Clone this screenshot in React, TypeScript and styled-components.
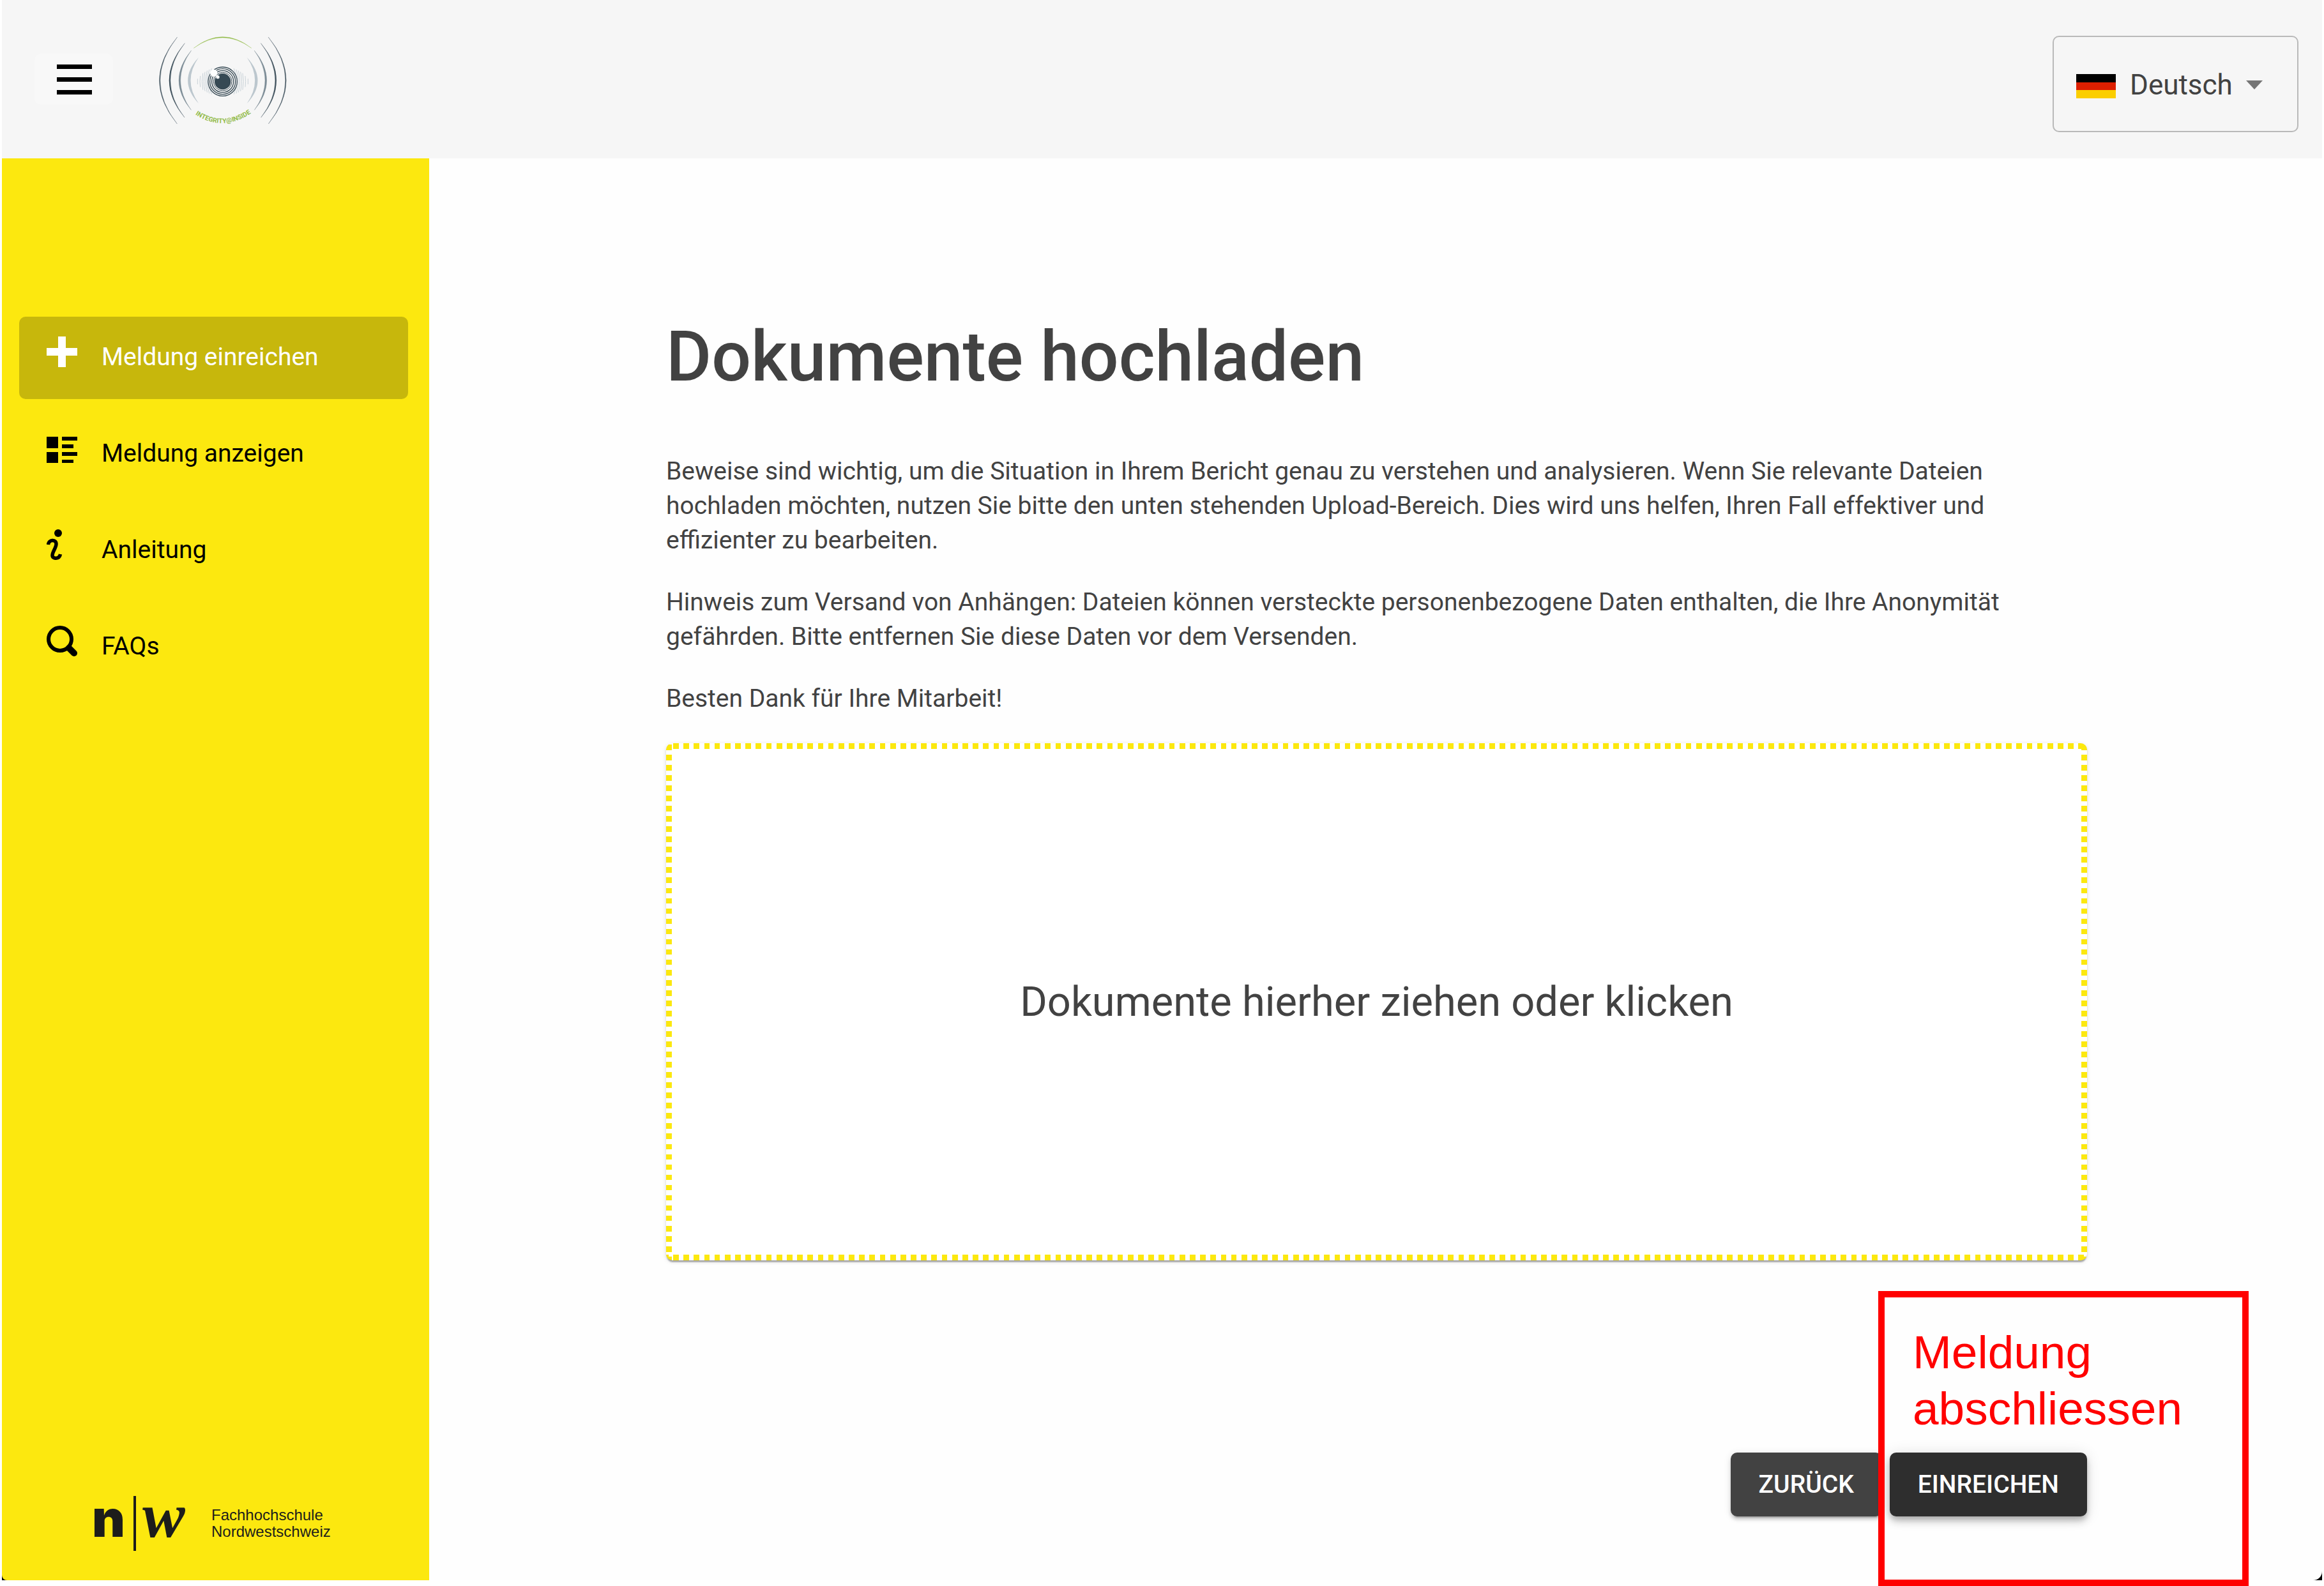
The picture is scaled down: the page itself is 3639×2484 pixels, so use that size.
import React from 'react';
import styled, { createGlobalStyle } from 'styled-components';

const yellow = '#fce80f';
const ink = '#424242';

const GlobalStyle = createGlobalStyle`
  *, *::before, *::after { box-sizing: border-box; }
  body {
    margin: 0;
    background: #fff;
    color: ${ink};
    font-family: Roboto, "Liberation Sans", sans-serif;
  }
`;

const Page = styled.div`
  display: flex;
  flex-direction: column;
  min-height: 100vh;
  padding: 0 3px 9px;
`;

const TopBar = styled.header`
  display: flex;
  align-items: center;
  height: 248px;
  padding: 0 37px 0 51px;
  background: #f6f6f6;
`;

const MenuButton = styled.button`
  display: flex;
  flex-direction: column;
  align-items: center;
  justify-content: center;
  gap: 13px;
  width: 123px;
  height: 80px;
  padding: 0 0 0 2px;
  border: 0;
  border-radius: 10px;
  background: #f8f8f8;
`;

const MenuBar = styled.span`
  width: 55px;
  height: 7px;
  background: #000;
`;

const HomeLink = styled.a`
  display: flex;
  margin: 4px auto 0 72px;
`;

const LanguagePicker = styled.label`
  display: flex;
  align-items: center;
  width: 385px;
  height: 151px;
  margin-top: 15px;
  padding: 6px 35px 0;
  border: 2px solid #b9b9b9;
  border-radius: 10px;
`;

const Flag = styled.svg`
  flex: none;
  width: 62px;
  height: 38px;
  margin-right: 22px;
`;

const LanguageSelect = styled.select`
  appearance: none;
  flex: none;
  margin: 0 21px 0 0;
  padding: 0 0 4px;
  border: 0;
  background: transparent;
  color: ${ink};
  font: 400 44px/50px Roboto, sans-serif;
`;

const Caret = styled.svg`
  flex: none;
  width: 26px;
  height: 14px;
  margin-bottom: 4px;
`;

/* The dark backdrop shows through at the rounded bottom corners. */
const Body = styled.div`
  display: flex;
  flex: 1;
  background: #000;
`;

const Sidebar = styled.aside`
  display: flex;
  flex: none;
  flex-direction: column;
  justify-content: space-between;
  width: 669px;
  padding: 248px 33px 46px 27px;
  border-bottom-left-radius: 8px;
  background: ${yellow};
`;

const Nav = styled.nav`
  display: flex;
  flex-direction: column;
  gap: 22px;
`;

const NavLink = styled.a<{ $active?: boolean }>`
  display: flex;
  align-items: center;
  height: 129px;
  padding: 0 43px 4px;
  border-radius: 10px;
  background: ${(p) => (p.$active ? '#c7b70c' : 'transparent')};
  color: ${(p) => (p.$active ? '#fff' : '#000')};
  font-size: 39px;
  line-height: 48px;
  text-decoration: none;
`;

const NavIcon = styled.svg`
  flex: none;
  width: 48px;
  height: 48px;
  margin: 0 38px 16px 0;
  fill: currentColor;
`;

const Brand = styled.div`
  display: flex;
  align-items: center;
  height: 86px;
  margin-left: 114px;
  color: #1d1d1b;
`;

const BrandN = styled.span`
  width: 65px;
  padding-bottom: 16px;
  font: 900 80px/70px Inter, sans-serif;
`;

const BrandW = styled.span`
  width: 122px;
  padding: 0 0 24px 10px;
  border-left: 4px solid #1d1d1b;
  font: italic 700 100px/62px "Liberation Serif", serif;
`;

const BrandName = styled.span`
  font: 400 24px/26px "Liberation Sans", sans-serif;
`;

const Main = styled.main`
  display: flex;
  flex: 1;
  flex-direction: column;
  padding: 248px 368px 100px 371px;
  border-bottom-right-radius: 14px;
  background: #fefefe;
`;

const Title = styled.h1`
  margin: 0 0 89px;
  font-size: 109px;
  font-weight: 500;
  line-height: 126px;
`;

const Copy = styled.div`
  max-width: 2100px;
  font-size: 39px;
  line-height: 54px;

  p { margin: 0 0 43px; }
`;

const DropZone = styled.button`
  height: 810px;
  padding: 0;
  border: 0;
  border-radius: 10px;
  background:
    repeating-linear-gradient(90deg, ${yellow} 0 1.08%, transparent 1.08% 2%) 11px 0 / 809px 9px repeat-x,
    repeating-linear-gradient(90deg, ${yellow} 0 1.08%, transparent 1.08% 2%) 11px 100% / 809px 9px repeat-x,
    repeating-linear-gradient(180deg, ${yellow} 0 1.08%, transparent 1.08% 2%) 0 18px / 9px 802px repeat-y,
    repeating-linear-gradient(180deg, ${yellow} 0 1.08%, transparent 1.08% 2%) 100% 18px / 9px 802px repeat-y,
    #fff;
  box-shadow: 0 5px 2px -2px rgba(0, 0, 0, .2), 0 2px 2px rgba(0, 0, 0, .14), 0 2px 7px rgba(0, 0, 0, .12);
  color: ${ink};
  font: 400 65px/76px Roboto, sans-serif;
`;

const Actions = styled.div`
  position: relative;
  display: flex;
  justify-content: flex-end;
  gap: 12px;
  margin-top: 301px;
`;

const ActionButton = styled.button<{ $raised?: boolean }>`
  height: 100px;
  padding: 0 44px;
  border: 0;
  border-radius: 10px;
  background: ${(p) => (p.$raised ? '#2e2e2e' : ink)};
  box-shadow: ${(p) =>
    p.$raised
      ? '0 5px 9px -2px rgba(0,0,0,.2), 0 9px 12px rgba(0,0,0,.14), 0 2px 23px rgba(0,0,0,.12)'
      : '0 7px 2px -5px rgba(0,0,0,.2), 0 5px 5px rgba(0,0,0,.14), 0 2px 12px rgba(0,0,0,.12)'};
  color: #fff;
  font: 500 39px/64px Roboto, sans-serif;
  text-transform: uppercase;
`;

/* Red callout laid over the submit button. */
const Callout = styled.div`
  position: absolute;
  top: -253px;
  right: -253px;
  width: 580px;
  height: 462px;
  padding: 42px 44px;
  border: 10px solid #f00;
  color: #f00;
  font: 400 73px/88px "Liberation Sans", Arial, sans-serif;
  pointer-events: none;
`;

const mirrored = (
  <g fill="none" strokeLinecap="round">
    <path d="M172 84Q5 287 172 491Q13 287 172 84Z" fill="#364954" stroke="#51626c" strokeWidth="1" />
    <path d="M207 113Q62 287 207 461Q74 287 207 113Z" fill="#364954" stroke="#51626c" strokeWidth="1" />
    <path d="M238 147Q122 287 238 426Q138 287 238 147Z" fill="#7b8b95" stroke="#7b8b95" strokeWidth="1" />
    <path d="M273 179Q172 287 273 395Q198 287 273 179Z" fill="#bcc7ce" />
    <g stroke="#c9d2d8" strokeWidth="3">
      <path d="M268 280V304" />
      <path d="M281 267Q277 292 281 317" />
      <path d="M293 254Q285 292 293 330" />
      <path d="M303 248Q292 292 303 336" />
      <path d="M313 242Q299 292 313 342" />
      <path d="M323 237Q303 292 323 347" />
      <path d="M334 232Q306 292 334 351" />
    </g>
  </g>
);

const IntegrityLogo = () => (
  <svg width="200" height="138" viewBox="87 80 600 414" role="img" aria-label="Integrity@Inside">
    {mirrored}
    <g transform="matrix(-1 0 0 1 773 0)">{mirrored}</g>
    <path d="M250 135Q386 29 521 135Q386 37 250 135Z" fill="#93bb4a" stroke="#93bb4a" />
    <circle cx="386" cy="292" r="70" fill="#f6f6f6" />
    <g fill="none" stroke="#364954">
      <circle cx="386" cy="292" r="68" strokeWidth="4" />
      <circle cx="386" cy="292" r="60" strokeWidth="4" />
      <circle cx="386" cy="292" r="51" strokeWidth="4" />
      <circle cx="386" cy="292" r="43" strokeWidth="3" />
    </g>
    <circle cx="386" cy="292" r="38" fill="#364954" />
    <circle cx="344" cy="252" r="17" fill="#fff" />
    <circle cx="363" cy="271" r="8" fill="#fff" />
    <path id="logo-curve" d="M236 432Q386 546 540 426" fill="none" />
    <text fill="#93bb4a" fontFamily="Roboto, sans-serif" fontSize="31" fontWeight="700">
      <textPath href="#logo-curve" startOffset="50%" textAnchor="middle">INTEGRITY@INSIDE</textPath>
    </text>
  </svg>
);

const PlusIcon = () => (
  <NavIcon viewBox="0 0 48 48" aria-hidden>
    <path d="M18 0H30V18H48V30H30V48H18V30H0V18H18Z" />
  </NavIcon>
);

const ListIcon = () => (
  <NavIcon viewBox="0 0 48 48" aria-hidden>
    <path d="M0 6H18V24H0ZM0 30H18V47H0ZM24 6H48V12H24ZM24 18H42V24H24ZM24 30H48V36H24ZM24 42H42V47H24Z" />
  </NavIcon>
);

const InfoIcon = () => (
  <NavIcon viewBox="0 0 48 48" aria-hidden>
    <circle cx="18" cy="6" r="6" />
    <path
      d="M2.500 24C3 16 15 15 15 23C15 29 9 35 9 41C9 47 20 47 21.500 39"
      fill="none"
      stroke="currentColor"
      strokeWidth="5.500"
    />
  </NavIcon>
);

const SearchIcon = () => (
  <NavIcon viewBox="0 0 48 48" aria-hidden>
    <circle cx="21" cy="21" r="18" fill="none" stroke="currentColor" strokeWidth="6" />
    <path d="M35 35L43 43" stroke="currentColor" strokeWidth="10" strokeLinecap="round" />
  </NavIcon>
);

export default function App() {
  return (
    <Page>
      <GlobalStyle />
      <TopBar>
        <MenuButton type="button" aria-label="Menü">
          <MenuBar />
          <MenuBar />
          <MenuBar />
        </MenuButton>
        <HomeLink href="#">
          <IntegrityLogo />
        </HomeLink>
        <LanguagePicker>
          <Flag viewBox="0 0 62 38" preserveAspectRatio="none" aria-hidden>
            <path d="M0 0H62V13H0Z" fill="#000" />
            <path d="M0 13H62V25H0Z" fill="#dd1f00" />
            <path d="M0 25H62V38H0Z" fill="#fbce00" />
          </Flag>
          <LanguageSelect aria-label="Sprache" defaultValue="de">
            <option value="de">Deutsch</option>
          </LanguageSelect>
          <Caret viewBox="0 0 26 14" aria-hidden>
            <path d="M0 0H26L13 14Z" fill="#757575" />
          </Caret>
        </LanguagePicker>
      </TopBar>
      <Body>
        <Sidebar>
          <Nav>
            <NavLink href="#einreichen" $active aria-current="page">
              <PlusIcon />
              Meldung einreichen
            </NavLink>
            <NavLink href="#anzeigen">
              <ListIcon />
              Meldung anzeigen
            </NavLink>
            <NavLink href="#anleitung">
              <InfoIcon />
              Anleitung
            </NavLink>
            <NavLink href="#faqs">
              <SearchIcon />
              FAQs
            </NavLink>
          </Nav>
          <Brand>
            <BrandN>n</BrandN>
            <BrandW>w</BrandW>
            <BrandName>
              Fachhochschule
              <br />
              Nordwestschweiz
            </BrandName>
          </Brand>
        </Sidebar>
        <Main>
          <Title>Dokumente hochladen</Title>
          <Copy>
            <p>
              Beweise sind wichtig, um die Situation in Ihrem Bericht genau zu verstehen und analysieren. Wenn Sie
              relevante Dateien hochladen möchten, nutzen Sie bitte den unten stehenden Upload-Bereich. Dies wird uns
              helfen, Ihren Fall effektiver und effizienter zu bearbeiten.
            </p>
            <p>
              Hinweis zum Versand von Anhängen: Dateien können versteckte personenbezogene Daten enthalten, die Ihre
              Anonymität gefährden. Bitte entfernen Sie diese Daten vor dem Versenden.
            </p>
            <p>Besten Dank für Ihre Mitarbeit!</p>
          </Copy>
          <DropZone type="button">Dokumente hierher ziehen oder klicken</DropZone>
          <Actions>
            <ActionButton type="button">Zurück</ActionButton>
            <ActionButton type="submit" $raised>
              Einreichen
            </ActionButton>
            <Callout>
              Meldung
              <br />
              abschliessen
            </Callout>
          </Actions>
        </Main>
      </Body>
    </Page>
  );
}
